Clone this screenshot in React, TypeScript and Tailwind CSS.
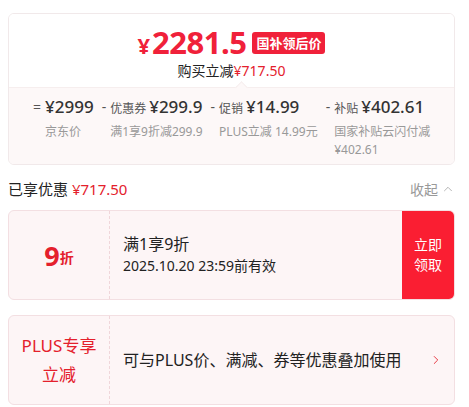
import { ChevronUp, ChevronRight } from 'lucide-react'

const font = { fontFamily: '"Noto Sans", "Noto Sans CJK SC", sans-serif' }

interface Part {
  sign: string
  name?: string
  value: string
  note: string
  className?: string
}

const parts: Part[] = [
  { sign: '=', value: '¥2999', note: '京东价' },
  { sign: '-', name: '优惠券', value: '¥299.9', note: '满1享9折减299.9' },
  { sign: '-', name: '促销', value: '¥14.99', note: 'PLUS立减 14.99元' },
  { sign: '-', name: '补贴', value: '¥402.61', note: '国家补贴云闪付减¥402.61', className: 'w-[100px]' },
]

function PriceCard() {
  return (
    <div className="rounded-md border border-[#f1e9ea] overflow-hidden">
      {/* Headline price */}
      <div className="flex flex-col items-center pt-[12px] pb-[6px] bg-white">
        <div className="flex items-center gap-[6px] h-[32px]">
          <div className="flex items-baseline text-[#f0213a] font-bold leading-none">
            <span className="text-[22px] mr-[2px]">¥</span>
            <span className="text-[31px] tracking-[-0.5px]">2281.5</span>
          </div>
          <span className="bg-[#f0213a] text-white font-bold text-[13px] leading-[22px] px-[4px] rounded-[3px] mt-[2px]">
            国补领后价
          </span>
        </div>
        <div className="text-[14px] leading-[20px] text-[#222] h-[20px] mt-[3px]">
          购买立减<span className="text-[#e4202c]">¥717.50</span>
        </div>
      </div>

      {/* Breakdown */}
      <div className="relative bg-[#fdf8f8] border-t border-[#f6eeee] px-[24px] pt-[8px] pb-[5px]">
        <div className="absolute -top-[5px] left-[228px] w-[9px] h-[9px] rotate-45 bg-[#fdf8f8] border-l border-t border-[#f6eeee]" />
        <div className="flex gap-[8px]">
          {parts.map((p) => (
            <div key={p.value} className="flex gap-[4px]">
              <span className="text-[14px] leading-[22px] text-[#555]">{p.sign}</span>
              <div className="flex flex-col">
                <div className="flex items-baseline gap-[3px] h-[22px] leading-[22px] whitespace-nowrap">
                  {p.name && <span className="text-[12px] text-[#555]">{p.name}</span>}
                  <span className="text-[17px] font-medium text-[#333]">{p.value}</span>
                </div>
                <div className={`text-[12px] leading-[18px] text-[#999] mt-[5px] ${p.className ?? 'whitespace-nowrap'}`}>
                  {p.note}
                </div>
              </div>
            </div>
          ))}
        </div>
      </div>
    </div>
  )
}

export default function App() {
  return (
    <div className="w-[469px] h-[407px] bg-white overflow-hidden" style={font}>
      <div className="w-[447px] ml-[8px] pt-[13px]">
        <PriceCard />

        <div className="flex items-center justify-between mt-[13px] h-[22px]">
          <div className="text-[15px] text-[#222]">
            已享优惠 <span className="text-[#e4202c]">¥717.50</span>
          </div>
          <div className="flex items-center gap-[3px] text-[14px] text-[#999]">
            收起
            <ChevronUp className="w-[14px] h-[14px]" strokeWidth={1.25} />
          </div>
        </div>

        {/* Coupon */}
        <div className="mt-[10px] h-[90px] flex rounded-md border border-[#f3dfe2] bg-[#fdf5f6] overflow-hidden">
          <div className="w-[101px] flex items-center justify-center border-r border-dashed border-[#f0d6da] text-[#e4202c] font-bold">
            <span className="text-[27px] leading-none">9</span>
            <span className="text-[14px] mt-[5px]">折</span>
          </div>
          <div className="flex-1 flex flex-col justify-center pl-[13px] text-[#222]">
            <div className="text-[16px] leading-[20px]">满1享9折</div>
            <div className="text-[14px] leading-[20px] mt-[2px]">2025.10.20 23:59前有效</div>
          </div>
          <div className="w-[52px] flex items-center justify-center bg-[#fa1e32] text-white text-[14px] leading-[20px] text-center">
            立即
            <br />
            领取
          </div>
        </div>

        {/* PLUS */}
        <div className="mt-[15px] h-[90px] flex rounded-md border border-[#f3dfe2] bg-[#fdf5f6] overflow-hidden">
          <div className="w-[101px] flex items-center justify-center border-r border-dashed border-[#f0d6da] text-[#e4202c] text-[17px] leading-[29px] text-center">
            PLUS专享
            <br />
            立减
          </div>
          <div className="flex-1 flex items-center pl-[13px] text-[16px] text-[#222]">
            可与PLUS价、满减、券等优惠叠加使用
          </div>
          <div className="w-[36px] flex items-center justify-center text-[#e4202c]">
            <ChevronRight className="w-[14px] h-[14px]" strokeWidth={1.5} />
          </div>
        </div>
      </div>
    </div>
  )
}
